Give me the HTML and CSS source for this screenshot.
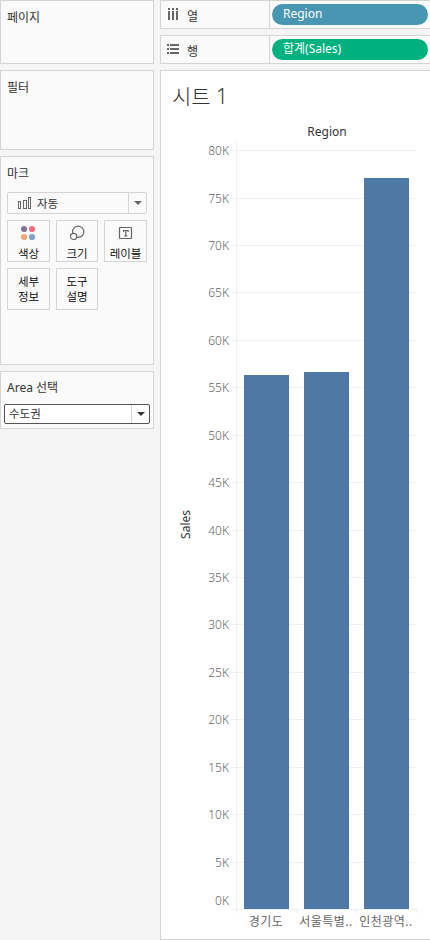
FILE: index.html
```html
<!DOCTYPE html>
<html lang="ko">
<head>
    <meta charset="UTF-8">
    <meta name="viewport" content="width=device-width, initial-scale=1.0">
    <title>시트 1</title>
    <link rel="stylesheet" href="styles.css">
</head>
<body>
    <div class="workspace">
        <div class="side">
            <div class="card card-pages"><h3>페이지</h3></div>
            <div class="card card-filters"><h3>필터</h3></div>

            <div class="card card-marks">
                <h3>마크</h3>
                <div class="mark-type">
                    <svg width="14" height="13" viewBox="0 0 14 13" fill="none" stroke="#666">
                        <rect x="0.5" y="4.5" width="2" height="7"/>
                        <rect x="5.5" y="3.5" width="3" height="8"/>
                        <rect x="10.5" y="0.5" width="2" height="11"/>
                    </svg>
                    <span class="mark-name">자동</span>
                    <span class="arrow"></span>
                </div>
                <div class="mark-buttons">
                    <button>
                        <svg width="16" height="16" viewBox="0 0 16 16">
                            <circle cx="3" cy="4" r="3.1" fill="#85709a"/>
                            <circle cx="11" cy="4" r="3.1" fill="#fb6b7c"/>
                            <circle cx="3" cy="12" r="3.1" fill="#f5a77c"/>
                            <circle cx="11" cy="12" r="3.1" fill="#7fa3cc"/>
                        </svg>
                        <span>색상</span>
                    </button>
                    <button>
                        <svg width="16" height="16" viewBox="0 0 16 16" stroke="#666" stroke-width="1.2">
                            <circle cx="9.2" cy="6.8" r="5.6" fill="none"/>
                            <circle cx="4.6" cy="11.4" r="3.1" fill="#fafafa"/>
                        </svg>
                        <span>크기</span>
                    </button>
                    <button>
                        <svg width="16" height="16" viewBox="0 0 16 16" fill="none" stroke="#666">
                            <rect x="1.5" y="2.5" width="12" height="11" rx="0.5" stroke-width="1.2"/>
                            <path d="M5.5 7V5.5h4.6V7M7.8 5.5v5.5M6.3 10.8h3" stroke-width="1.2"/>
                        </svg>
                        <span>레이블</span>
                    </button>
                    <button class="text-only">세부<br>정보</button>
                    <button class="text-only">도구<br>설명</button>
                </div>
            </div>

            <div class="card card-param">
                <h3>Area 선택</h3>
                <div class="param-select">
                    <span class="param-value">수도권</span>
                    <span class="arrow arrow-dark"></span>
                </div>
            </div>
        </div>

        <div class="main">
            <div class="shelf">
                <div class="shelf-name">
                    <svg width="12" height="12" viewBox="0 0 12 12" fill="#666">
                        <path d="M1 0h2v2H1zM5 0h2v2H5zM9 0h2v2H9zM1 3h2v9H1zM5 3h2v9H5zM9 3h2v9H9z"/>
                    </svg>
                    <span>열</span>
                </div>
                <div class="pill pill-blue">Region</div>
            </div>
            <div class="shelf">
                <div class="shelf-name">
                    <svg width="12" height="12" viewBox="0 0 12 12" fill="#666">
                        <path d="M0 1h2v2H0zM0 5h2v2H0zM0 9h2v2H0zM3 1h9v2H3zM3 5h9v2H3zM3 9h9v2H3z"/>
                    </svg>
                    <span>행</span>
                </div>
                <div class="pill pill-green">합계(Sales)</div>
            </div>

            <div class="sheet">
                <h1>시트 1</h1>
                <div class="field-title">Region</div>
                <div class="chart">
                    <div class="axis-title"><span>Sales</span></div>
                    <div class="axis">
                        <span>80K</span>
                        <span>75K</span>
                        <span>70K</span>
                        <span>65K</span>
                        <span>60K</span>
                        <span>55K</span>
                        <span>50K</span>
                        <span>45K</span>
                        <span>40K</span>
                        <span>35K</span>
                        <span>30K</span>
                        <span>25K</span>
                        <span>20K</span>
                        <span>15K</span>
                        <span>10K</span>
                        <span>5K</span>
                        <span class="zero">0K</span>
                    </div>
                    <div class="plot">
                        <div class="gridlines">
                            <i></i><i></i><i></i><i></i><i></i><i></i><i></i><i></i>
                            <i></i><i></i><i></i><i></i><i></i><i></i><i></i><i></i>
                            <i></i>
                        </div>
                        <div class="bars">
                            <div class="bar" style="height: 534px"></div>
                            <div class="bar" style="height: 537px"></div>
                            <div class="bar" style="height: 731px"></div>
                        </div>
                    </div>
                    <div class="categories">
                        <span>경기도</span>
                        <span>서울특별..</span>
                        <span>인천광역..</span>
                    </div>
                </div>
            </div>
        </div>
    </div>
</body>
</html>
```

FILE: styles.css
```css
* {
    margin: 0;
    padding: 0;
    box-sizing: border-box;
}

body {
    font-family: "Noto Sans", "Noto Sans CJK KR", sans-serif;
    font-size: 12px;
    line-height: 16px;
    color: #333;
    background: #f5f5f5;
    overflow: hidden;
}

svg {
    display: block;
}

.workspace {
    display: grid;
    grid-template-columns: 154px 276px;
    gap: 6px;
    width: 430px;
    height: 940px;
    overflow: hidden;
}

/* left cards */
.side {
    display: flex;
    flex-direction: column;
}

.card {
    background: #fafafa;
    border: 1px solid #d4d4d4;
    padding: 9px 6px 0;
}

.card h3 {
    font-size: 12px;
    font-weight: normal;
    line-height: 16px;
}

.card-pages {
    height: 64px;
    margin-bottom: 6px;
}

.card-filters {
    height: 80px;
    margin-bottom: 6px;
}

.card-marks {
    height: 209px;
    margin-bottom: 6px;
}

.card-param {
    height: 58px;
    padding: 8px 3px 0;
}

.card-param h3 {
    padding-left: 3px;
}

.mark-type {
    display: flex;
    align-items: center;
    height: 22px;
    margin-top: 10px;
    padding-left: 10px;
    border: 1px solid #d4d4d4;
    border-radius: 2px;
}

.mark-name {
    flex: 1;
    font-size: 11.5px;
    padding: 2px 0 0 5px;
}

.arrow {
    display: flex;
    align-items: center;
    justify-content: center;
    width: 18px;
    height: 100%;
    border-left: 1px solid #d4d4d4;
}

.arrow::before {
    content: "";
    border: 4px solid transparent;
    border-top-color: #666;
    border-bottom: 0;
}

.arrow-dark::before {
    border-top-color: #333;
}

.mark-buttons {
    display: grid;
    grid-template-columns: 43px 42px 43px;
    grid-auto-rows: 42px;
    gap: 6px;
    margin-top: 6px;
}

.mark-buttons button {
    display: flex;
    flex-direction: column;
    align-items: center;
    padding-top: 4px;
    border: 1px solid #d4d4d4;
    background: #fafafa;
    color: #000;
    font-family: inherit;
    font-size: 11.5px;
    font-weight: 350;
    line-height: 15px;
    white-space: nowrap;
}

.mark-buttons span {
    margin-top: 5px;
}

.mark-buttons .text-only {
    display: block;
    padding-top: 0;
    text-align: center;
}

.param-select {
    display: flex;
    align-items: center;
    height: 20px;
    margin-top: 8px;
    padding-left: 4px;
    border: 1px solid #555;
    border-radius: 2px;
    background: #fff;
}

.param-value {
    flex: 1;
    font-size: 11.5px;
}

/* shelves and sheet */
.main {
    display: flex;
    flex-direction: column;
}

.shelf {
    display: flex;
    align-items: center;
    height: 29px;
    margin-bottom: 6px;
    border: 1px solid #d4d4d4;
    background: #fafafa;
}

.shelf-name {
    display: flex;
    align-items: center;
    gap: 8px;
    width: 109px;
    height: 100%;
    padding-left: 6px;
    border-right: 1px solid #d4d4d4;
}

.shelf-name svg {
    margin-bottom: 1px;
}

.shelf-name span {
    padding-top: 5px;
}

.pill {
    width: 156px;
    height: 21px;
    margin-left: 2px;
    padding-left: 11px;
    border-radius: 11px;
    color: #fff;
    line-height: 20px;
}

.pill-blue {
    background: #4996b2;
}

.pill-green {
    background: #00b180;
}

.sheet {
    flex: none;
    height: 870px;
    padding-left: 10px;
    border: 1px solid #d4d4d4;
    background: #fff;
}

.sheet h1 {
    height: 53px;
    padding: 11px 0 0 1px;
    font-size: 21px;
    font-weight: 300;
    line-height: 28px;
}

.field-title {
    width: 180px;
    margin-left: 66px;
    text-align: center;
}

.chart {
    display: grid;
    grid-template-columns: 30px 30px 185px;
    grid-template-rows: 769px 24px;
}

.axis-title {
    display: flex;
    align-items: center;
    justify-content: center;
}

.axis-title span {
    writing-mode: vertical-rl;
    transform: rotate(180deg);
}

.axis {
    display: grid;
    grid-template-rows: repeat(16, 47.45px) 0;
    padding: 10.1px 2px 0 0;
    color: #666;
    font-weight: 300;
    text-align: right;
}

.axis span {
    height: 16px;
    margin-top: -7px;
}

.axis .zero {
    margin-top: -16px;
}

.plot {
    display: grid;
}

.gridlines,
.bars {
    grid-area: 1 / 1;
}

.gridlines {
    display: grid;
    grid-template-rows: repeat(16, 47.45px) 1px;
    padding-top: 10.1px;
    background: linear-gradient(#f0f0f0, #f0f0f0) 5px 0 / 1px 100% no-repeat;
}

.gridlines i {
    border-top: 1px solid #f0f0f0;
}

.bars {
    display: grid;
    grid-template-columns: repeat(3, 45px);
    align-items: end;
    gap: 15px;
    padding: 0 0 1px 13px;
}

.bar {
    background: #4e79a7;
}

.categories {
    grid-column: 3;
    display: grid;
    grid-template-columns: repeat(3, 60px);
    width: 186px;
    padding: 5px 0 0 5px;
    color: #666;
    font-size: 12px;
    letter-spacing: 0.5px;
    text-align: center;
    white-space: nowrap;
    background: repeating-linear-gradient(90deg, #f0f0f0 0 1px, transparent 1px 60px) 5px 0 / 181px 4px no-repeat;
}
```
